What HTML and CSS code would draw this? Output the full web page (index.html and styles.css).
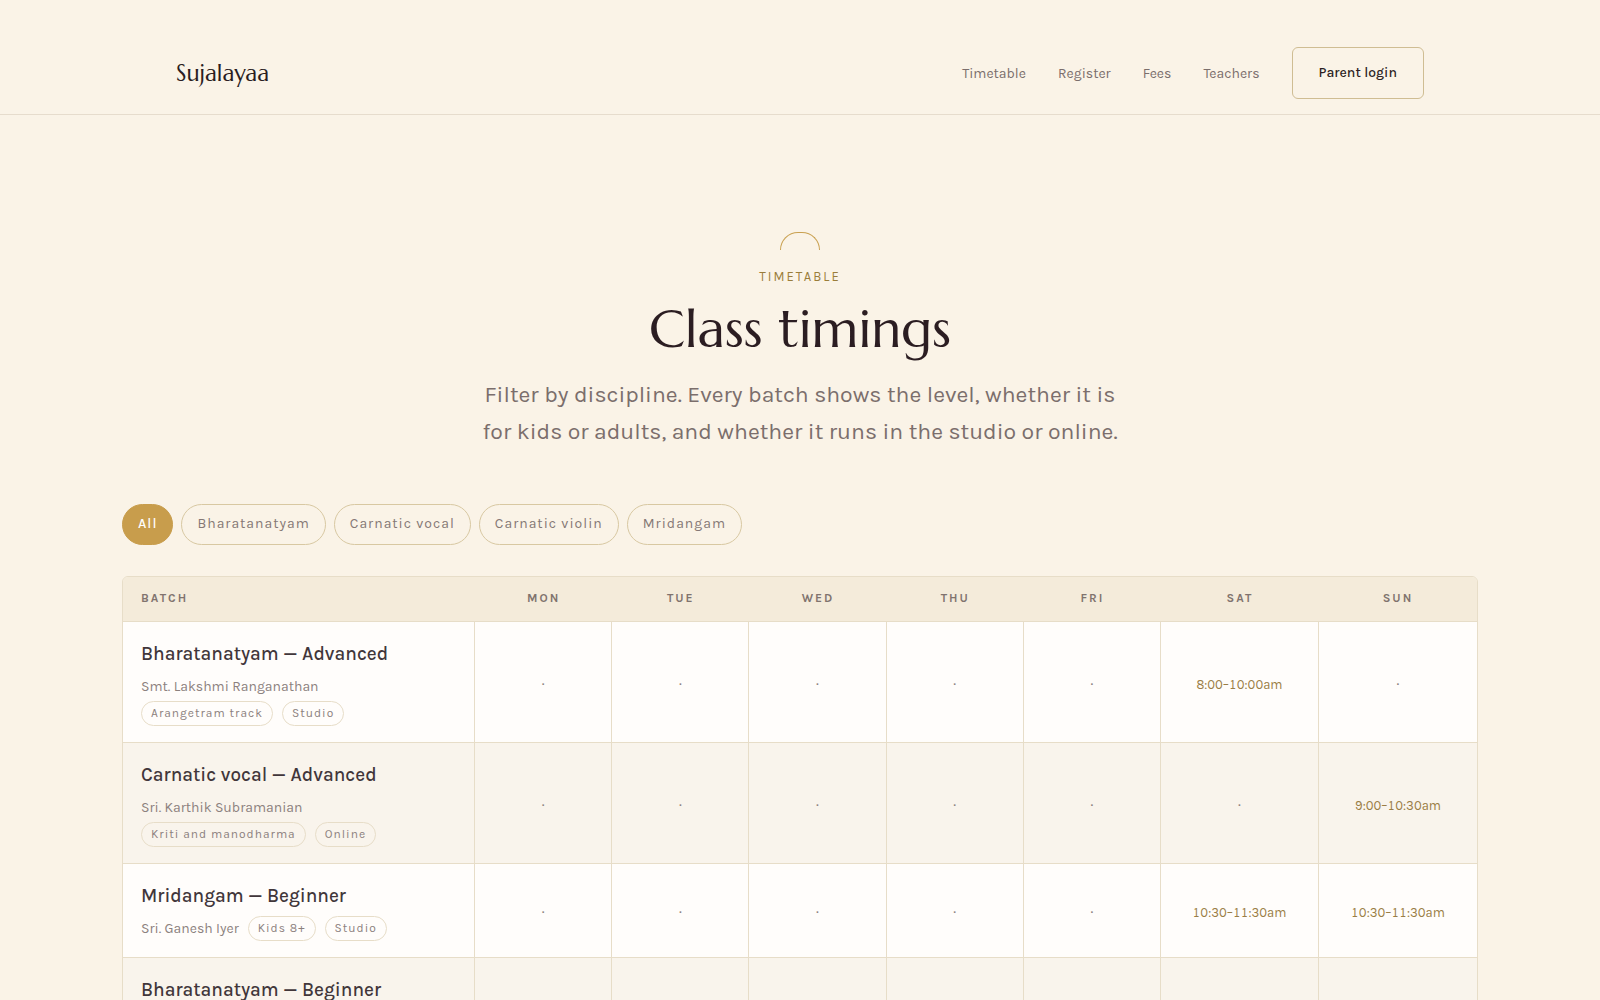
FILE: index.html
```html
<!DOCTYPE html>
<html lang="en">
<head>
<meta charset="utf-8">
<meta name="viewport" content="width=device-width, initial-scale=1">
<title>Class timings</title>
<link rel="stylesheet" href="styles.css">
</head>

<body>
  <header class="site-header">
    <div class="header-inner">
      <a class="logo" href="#">Sujalayaa</a>
      <nav class="site-nav">
        <a href="#">Timetable</a>
        <a href="#">Register</a>
        <a href="#">Fees</a>
        <a href="#">Teachers</a>
        <a class="login-link" href="#">Parent login</a>
      </nav>
    </div>
  </header>

  <main>
    <section class="intro">
      <div class="arch"></div>
      <p class="eyebrow">Timetable</p>
      <h1>Class timings</h1>
      <p class="lead">Filter by discipline. Every batch shows the level, whether it is<br>for kids or adults, and whether it runs in the studio or online.</p>
    </section>

    <div class="filters">
      <button type="button" class="filter active">All</button>
      <button type="button" class="filter">Bharatanatyam</button>
      <button type="button" class="filter">Carnatic vocal</button>
      <button type="button" class="filter">Carnatic violin</button>
      <button type="button" class="filter">Mridangam</button>
    </div>

    <div class="table-wrap">
      <table>
        <colgroup>
          <col class="col-batch">
          <col span="5">
          <col class="col-weekend" span="2">
        </colgroup>
        <thead>
          <tr>
            <th scope="col">Batch</th>
            <th scope="col">Mon</th>
            <th scope="col">Tue</th>
            <th scope="col">Wed</th>
            <th scope="col">Thu</th>
            <th scope="col">Fri</th>
            <th scope="col">Sat</th>
            <th scope="col">Sun</th>
          </tr>
        </thead>
        <tbody>
          <tr>
            <td>
              <div class="batch-name">Bharatanatyam — Advanced</div>
              <div class="meta">
                <span class="teacher">Smt. Lakshmi Ranganathan</span>
                <span class="tag">Arangetram track</span>
                <span class="tag">Studio</span>
              </div>
            </td>
            <td>·</td>
            <td>·</td>
            <td>·</td>
            <td>·</td>
            <td>·</td>
            <td class="time">8:00–10:00am</td>
            <td>·</td>
          </tr>
          <tr>
            <td>
              <div class="batch-name">Carnatic vocal — Advanced</div>
              <div class="meta">
                <span class="teacher">Sri. Karthik Subramanian</span>
                <span class="tag">Kriti and manodharma</span>
                <span class="tag">Online</span>
              </div>
            </td>
            <td>·</td>
            <td>·</td>
            <td>·</td>
            <td>·</td>
            <td>·</td>
            <td>·</td>
            <td class="time">9:00–10:30am</td>
          </tr>
          <tr>
            <td>
              <div class="batch-name">Mridangam — Beginner</div>
              <div class="meta">
                <span class="teacher">Sri. Ganesh Iyer</span>
                <span class="tag">Kids 8+</span>
                <span class="tag">Studio</span>
              </div>
            </td>
            <td>·</td>
            <td>·</td>
            <td>·</td>
            <td>·</td>
            <td>·</td>
            <td class="time">10:30–11:30am</td>
            <td class="time">10:30–11:30am</td>
          </tr>
          <tr>
            <td>
              <div class="batch-name">Bharatanatyam — Beginner</div>
            </td>
            <td></td>
            <td></td>
            <td></td>
            <td></td>
            <td></td>
            <td></td>
            <td></td>
          </tr>
        </tbody>
      </table>
    </div>
  </main>
</body>
</html>
```
FILE: styles.css
```css
* {
  box-sizing: border-box;
}
body {
  background-color: #faf3e7;
  color: #2b1d22;
  font-family: Karla, Roboto, sans-serif;
  margin: 0;
}
.site-header {
  border-bottom: 1px solid #e6dccd;
  padding: 47px 24px 15px;
}
.header-inner {
  align-items: center;
  display: flex;
  justify-content: space-between;
  margin: 0 auto;
  max-width: 1248px;
}
.logo {
  color: #2b1d22;
  font-family: Marcellus, Lato, sans-serif;
  font-size: 23px;
  text-decoration: none;
}
.site-nav {
  align-items: center;
  display: flex;
  gap: 32px;
}
.site-nav a {
  color: #7b6e6c;
  font-size: 14px;
  text-decoration: none;
}
.site-nav .login-link {
  border: 1px solid #cfbd93;
  border-radius: 6px;
  color: #2b1d22;
  font-weight: 500;
  line-height: 50px;
  padding: 0 26px;
}
main {
  margin: 0 auto;
  max-width: 1404px;
  padding: 117px 24px 64px;
}
.intro {
  align-items: center;
  display: flex;
  flex-direction: column;
  text-align: center;
}
.arch {
  border: 1px solid #c9a050;
  border-bottom: none;
  border-radius: 18px 18px 0 0;
  height: 18px;
  width: 40px;
}
.eyebrow {
  color: #9a7d3a;
  font-size: 13px;
  letter-spacing: 2px;
  line-height: 20px;
  margin: 17px 0 0;
  text-transform: uppercase;
}
h1 {
  font-family: Marcellus, Lato, sans-serif;
  font-size: 53px;
  font-weight: 400;
  line-height: 64px;
  margin: 10px 0 15px;
}
.lead {
  color: #7b6e6c;
  font-size: 23px;
  line-height: 37px;
  margin: 0;
}
.filters {
  display: flex;
  flex-wrap: wrap;
  gap: 8px;
  margin: 54px 0 31px;
}
.filter {
  background-color: transparent;
  border: 1px solid #d8c8a2;
  border-radius: 21px;
  color: #857875;
  cursor: pointer;
  font-family: inherit;
  font-size: 14px;
  height: 41px;
  letter-spacing: 1px;
  padding: 0 15px 2px;
}
.filter.active {
  background-color: #c89d4c;
  border-color: #c89d4c;
  color: #fffdfb;
  font-weight: 500;
}
.table-wrap {
  border: 1px solid #e7ddc8;
  border-radius: 6px;
  overflow: hidden;
}
table {
  border-collapse: separate;
  border-spacing: 0;
  table-layout: fixed;
  width: 100%;
}
.col-batch {
  width: 26%;
}
.col-weekend {
  width: 158px;
}
th {
  background-color: #f4ebda;
  border-bottom: 1px solid #e7ddc8;
  color: #80736e;
  font-size: 12px;
  height: 45px;
  letter-spacing: 2px;
  padding: 0 18px 2px;
  text-transform: uppercase;
}
td {
  background-color: #fffdfb;
  border-bottom: 1px solid #e7ddc8;
  border-right: 1px solid #e7ddc8;
  color: #8c817e;
  font-size: 16px;
  padding: 16px 8px;
  text-align: center;
}
tbody tr:nth-child(even) td {
  background-color: #f9f4ec;
}
th:first-child,
td:first-child {
  padding-left: 18px;
  padding-right: 18px;
  text-align: left;
}
td:last-child {
  border-right: none;
}
tr:last-child td {
  border-bottom: none;
}
td.time {
  color: #9a7d45;
  font-size: 13px;
  font-variant-numeric: tabular-nums;
  padding-top: 20px;
}
.batch-name {
  color: #41363a;
  font-size: 19px;
  font-weight: 500;
  line-height: 32px;
}
.meta {
  display: flex;
  flex-wrap: wrap;
  font-size: 14px;
  gap: 2px 9px;
  line-height: 25px;
  margin-top: 4px;
}
.tag {
  border: 1px solid #e7ddc8;
  border-radius: 13px;
  font-size: 12px;
  letter-spacing: 1px;
  line-height: 23px;
  padding: 0 9px;
}
```
